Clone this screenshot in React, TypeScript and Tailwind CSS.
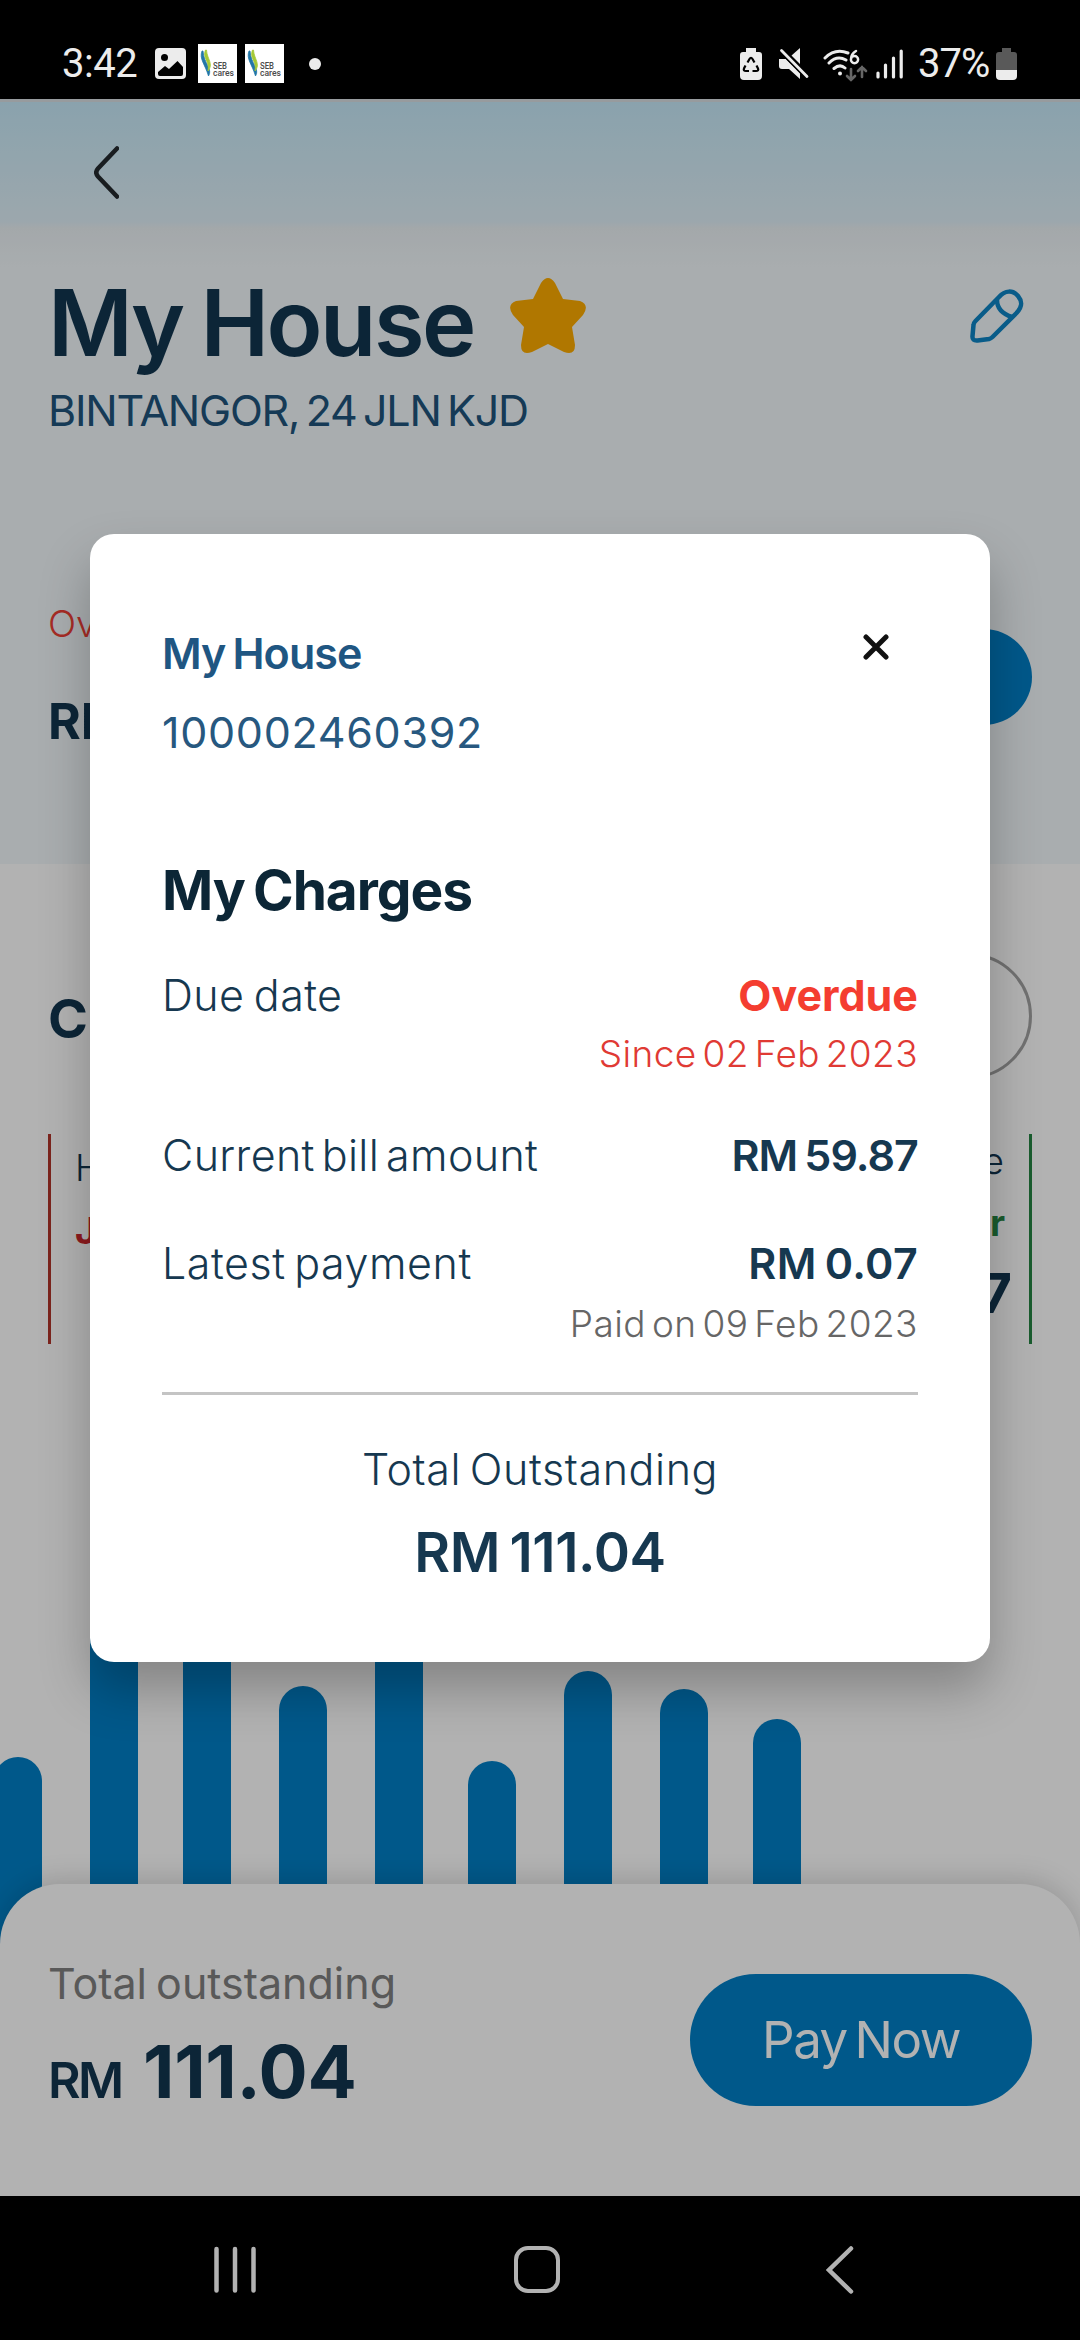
const bars = [
  { gap: 0, height: 187 },
  { gap: 48, height: 360 },
  { gap: 45, height: 340 },
  { gap: 48, height: 258 },
  { gap: 48, height: 350 },
  { gap: 45, height: 183 },
  { gap: 48, height: 273 },
  { gap: 48, height: 255 },
  { gap: 45, height: 225 },
];

function SebBadge() {
  return (
    <svg width="39" height="39" viewBox="0 0 39 39" className="bg-white font-['Roboto',sans-serif]">
      <path d="M4 7C1 15 7 20 10.500 32C15 25 6 20 5 7Z" fill="#2277a8" stroke="#2277a8" strokeWidth="0.800" />
      <path d="M7.500 6C4 14 12 17 10 27C16 20 9 15 8.500 6Z" fill="#a5c936" stroke="#a5c936" strokeWidth="0.800" />
      <text x="15" y="24.500" fontSize="9.500" fontWeight="500" fill="#4a4a4a" textLength="14" lengthAdjust="spacingAndGlyphs">SEB</text>
      <text x="15" y="32" fontSize="9.500" fontWeight="500" fill="#4a4a4a" textLength="21" lengthAdjust="spacingAndGlyphs">cares</text>
    </svg>
  );
}

function StatusBar() {
  return (
    <div className="flex h-[99px] items-center justify-between bg-black pt-[28px] pr-[63px] pl-[62px] font-['Roboto',sans-serif] text-[40px] leading-[44px] text-[#ececec]">
      <div className="flex items-center">
        <span className="w-[93px] tracking-[-0.5px]">3:42</span>
        <svg width="31" height="31" viewBox="0 0 31 31" className="mr-[12px]">
          <rect width="31" height="31" rx="4" fill="#ececec" />
          <circle cx="9.5" cy="9.5" r="3.5" fill="#000" />
          <path d="M3 24L10 18L14 21L22.500 13L28 19V26Q28 28 26 28H5Q3 28 3 26Z" fill="#000" />
        </svg>
        <div className="flex gap-2">
          <SebBadge />
          <SebBadge />
        </div>
        <span className="ml-[25px] size-3 rounded-full bg-[#ececec]" />
      </div>
      <div className="flex items-center">
        <svg width="22" height="32" viewBox="0 0 22 32">
          <path d="M6 0H16V4H19Q22 4 22 7V28Q22 32 18 32H4Q0 32 0 28V7Q0 4 3 4H6Z" fill="#ececec" />
          <path d="M7.500 14.500L9.500 11Q11 8.500 12.500 11L14.500 14.500M16.500 17.500L18 20.500Q19 23 16 23H12.500M9 23H6Q3 23 4 20.500L5.500 17.500" fill="none" stroke="#000" strokeWidth="2.200" />
        </svg>
        <svg width="30" height="31" viewBox="0 0 30 31" className="ml-[17px]">
          <path d="M0 11H7L21 25V31L10 21H3Q0 21 0 18ZM12.500 7.500L21 0V16Z" fill="#ececec" />
          <path d="M2.500 2.500L28 28.500" stroke="#000" strokeWidth="6" />
          <path d="M2.500 2.500L28 28.500" stroke="#ececec" strokeWidth="2.800" strokeLinecap="round" />
        </svg>
        <svg width="45" height="34" viewBox="0 0 45 34" className="mt-1 ml-[14px]" fill="none" stroke="#ececec" strokeWidth="3" strokeLinecap="round">
          <path d="M2 9Q12 -1 25 4M6 14Q14 6 23 11M11 19.500Q17 14.500 22 19" />
          <circle cx="17" cy="24.500" r="2" fill="#ececec" stroke="none" />
          <path d="M33 2Q28 5 28 10M31.500 7A3.600 3.600 0 1 1 31.500 14.200A3.600 3.600 0 1 1 31.500 7" strokeWidth="2.500" />
          <path d="M28 20V31M24 27L28 31L32 27M39 28V18M35 22L39 18L43 22" stroke="#666" strokeWidth="2.600" />
        </svg>
        <svg width="28" height="30" viewBox="0 0 28 30" className="ml-[8px]" stroke="#ececec" strokeWidth="3.200" strokeLinecap="round">
          <path d="M2 24V28M9.500 16V28M17.500 9V28M25.200 2V28" />
        </svg>
        <span className="ml-[14px] w-[78px] tracking-[-1px]">37%</span>
        <svg width="21" height="32" viewBox="0 0 21 32">
          <path d="M6 0H15V4H18Q21 4 21 7V22H0V7Q0 4 3 4H6Z" fill="#595959" />
          <path d="M0 22H21V28Q21 32 17 32H4Q0 32 0 28Z" fill="#ececec" />
        </svg>
      </div>
    </div>
  );
}

function AccountHeader() {
  return (
    <header className="flex h-[765px] flex-col border-t-[3px] border-[#d8dfe3] bg-[linear-gradient(180deg,#c6e9f8_0px,#e0f0f8_120px,#eaf1f4_126px,#f2f8fb_165px)] px-[48px]">
      <svg width="25" height="53" viewBox="0 0 25 53" className="mt-[44px] ml-[46px]" fill="none" stroke="#242a2e" strokeWidth="4.500" strokeLinecap="round">
        <path d="M23 2.500L4 22.500Q0.500 26.500 4 30.500L23 50.500" />
      </svg>
      <div className="mt-[76px] flex items-center">
        <h1 className="text-[92px] leading-[96px] font-semibold tracking-[-2.500px] whitespace-nowrap text-[#123650] [word-spacing:-3px]">My House</h1>
        <svg width="76" height="76" viewBox="0 0 76 76" className="mt-[-14px] mr-[384px] ml-auto shrink-0" fill="#fcab00">
          <path d="M31 5Q38 -5 45 5L53 21L70 23Q80 27 73 37L62 49L65 67Q65 78 54 74L38 66L22 74Q11 78 11 67L14 49L3 37Q-4 27 6 23L23 21Z" />
        </svg>
        <svg width="54" height="56" viewBox="0 0 54 56" className="mt-[-13px] mr-[8px] shrink-0" fill="none" stroke="#0d84c4" strokeWidth="4.500" strokeLinejoin="round">
          <path d="M5.500 32L29 8C35 1 43 1 48 7C53 13 52 18 46.500 24L22.500 48Q21 49.500 19 50L7.500 51.500Q2 52 2.500 47L3.500 36Q3.500 34 5.500 32Z" />
          <path d="M27 11Q27 23 42 28" />
        </svg>
      </div>
      <p className="mt-[12px] text-[43px] leading-[54px] tracking-[-1.200px] text-[#20547c] [word-spacing:-4.500px]">BINTANGOR, 24 JLN KJD</p>
      <div className="mt-[164px] flex items-start justify-between">
        <div>
          <p className="text-[37px] leading-[46px] font-light text-[#ee4035]">Ov</p>
          <p className="mt-[44px] text-[50px] leading-[60px] font-bold text-[#123650]">RM</p>
        </div>
        <div className="mt-[28px] h-[96px] w-[300px] rounded-full bg-[#007fc6]" />
      </div>
    </header>
  );
}

function UsageSection() {
  return (
    <section className="flex h-[1080px] flex-col">
      <div className="mt-[89px] flex h-[126px] items-center justify-between px-[48px]">
        <h2 className="mt-[6px] text-[54px] leading-[60px] font-bold text-[#123650]">C</h2>
        <div className="h-[126px] w-[300px] rounded-full border-[3px] border-[#a3a3a3]" />
      </div>
      <div className="mt-[55px] flex h-[210px] justify-between px-[48px]">
        <div className="border-l-[3px] border-[#b0342a] pt-[11px] pl-[24px]">
          <p className="text-[37px] leading-[46px] font-light text-[#123650]">H</p>
          <p className="mt-[17px] text-[37px] leading-[46px] font-bold text-[#cb262b]">J</p>
        </div>
        <div className="border-r-[3px] border-[#258542] pt-[4px] pr-[17px] text-right">
          <p className="pr-[8px] text-[37px] leading-[46px] font-light text-[#123650]">e</p>
          <p className="mt-[16px] pr-[7px] text-[37px] leading-[46px] font-bold text-[#258542]">r</p>
          <p className="mt-[15px] text-[55px] leading-[64px] font-bold text-[#123650]">7</p>
        </div>
      </div>
      <div className="-ml-[6px] flex flex-1 items-end">
        {bars.map((bar, i) => (
          <div
            key={i}
            className="w-12 shrink-0 rounded-t-full bg-[#007fc6]"
            style={{ marginLeft: bar.gap, height: bar.height }}
          />
        ))}
      </div>
    </section>
  );
}

function PaySheet() {
  return (
    <div className="relative -mt-[60px] flex h-[312px] items-start justify-between rounded-t-[60px] bg-white px-[48px] shadow-[0_-4px_28px_rgba(0,0,0,0.16)]">
      <div className="pt-[72px]">
        <p className="text-[43px] leading-[54px] text-[#808080] [word-spacing:-3px]">Total outstanding</p>
        <p className="mt-[22px] flex items-baseline leading-[80px] text-[#123650]">
          <span className="w-[95px] text-[50px] font-semibold tracking-[-2.500px]">RM</span>
          <span className="text-[73px] font-bold tracking-[-0.300px]">111.04</span>
        </p>
      </div>
      <button className="mt-[90px] h-[132px] w-[342px] rounded-full bg-[#007fc6] text-[51px] tracking-[-1.500px] text-white [word-spacing:-5px]">Pay Now</button>
    </div>
  );
}

function NavBar() {
  return (
    <nav className="flex h-[144px] items-start bg-black pt-[50px]">
      <svg width="42" height="47" viewBox="0 0 42 47" className="ml-[214px]" stroke="#fff" strokeWidth="4.500" strokeLinecap="round">
        <path d="M2.500 3V44.500M21 3V44.500M39.500 3V44.500" />
      </svg>
      <div className="ml-[258px] h-[47px] w-[46px] rounded-[14px] border-[4.500px] border-white" />
      <svg width="28" height="48" viewBox="0 0 28 48" className="ml-[266px]" fill="none" stroke="#fff" strokeWidth="4.500" strokeLinecap="round">
        <path d="M25 2.500L3 24L25 45.500" />
      </svg>
    </nav>
  );
}

function ChargesModal() {
  return (
    <div className="h-[1128px] w-[900px] rounded-[24px] bg-white px-[72px] pt-[92px] text-[43px] leading-[54px] text-[#163850] shadow-[0_28px_50px_rgba(0,0,0,0.25)]">
      <div className="flex justify-between">
        <h3 className="font-semibold tracking-[-0.900px] text-[#1f5682] [word-spacing:-3px]">My House</h3>
        <svg width="26" height="26" viewBox="0 0 26 26" className="mt-[8px] mr-[29px]" stroke="#111" strokeWidth="5" strokeLinecap="round">
          <path d="M3 3L23 23M23 3L3 23" />
        </svg>
      </div>
      <p className="mt-[25px] tracking-[0.700px] text-[#27587f]">100002460392</p>
      <h2 className="mt-[99px] text-[55px] leading-[64px] font-bold tracking-[-1px] text-[#0c2636] [word-spacing:-4px]">My Charges</h2>
      <div className="mt-[46px] flex justify-between">
        <span className="font-light tracking-[0.400px] [word-spacing:-3px]">Due date</span>
        <span className="font-bold text-[#f43d30]">Overdue</span>
      </div>
      <p className="mt-[9px] text-right text-[37px] leading-[46px] font-light tracking-[0.400px] text-[#e03a34] [word-spacing:-5px]">Since 02 Feb 2023</p>
      <div className="mt-[51px] flex justify-between">
        <span className="font-light tracking-[0.350px] [word-spacing:-5.500px]">Current bill amount</span>
        <span className="font-semibold tracking-[-0.900px] [word-spacing:-3px]">RM 59.87</span>
      </div>
      <div className="mt-[54px] flex justify-between">
        <span className="font-light tracking-[0.550px] [word-spacing:-4px]">Latest payment</span>
        <span className="font-semibold tracking-[0.300px] [word-spacing:-3px]">RM 0.07</span>
      </div>
      <p className="mt-[11px] text-right text-[37px] leading-[46px] font-light tracking-[0.450px] text-[#666] [word-spacing:-5px]">Paid on 09 Feb 2023</p>
      <hr className="mt-[45px] border-t-[3px] border-[#c4c4c4]" />
      <p className="mt-[47px] text-center font-light tracking-[0.600px] [word-spacing:-4px]">Total Outstanding</p>
      <p className="mt-[24px] text-center text-[55px] leading-[64px] font-semibold tracking-[-0.400px] [word-spacing:-4px]">RM 111.04</p>
    </div>
  );
}

export default function App() {
  return (
    <div className="relative h-[2340px] w-[1080px] overflow-hidden bg-white font-['Inter',sans-serif]">
      <StatusBar />
      <AccountHeader />
      <UsageSection />
      <PaySheet />
      <NavBar />
      <div className="absolute inset-x-0 top-[99px] bottom-0 flex justify-center bg-black/30 pt-[435px]">
        <ChargesModal />
      </div>
    </div>
  );
}
